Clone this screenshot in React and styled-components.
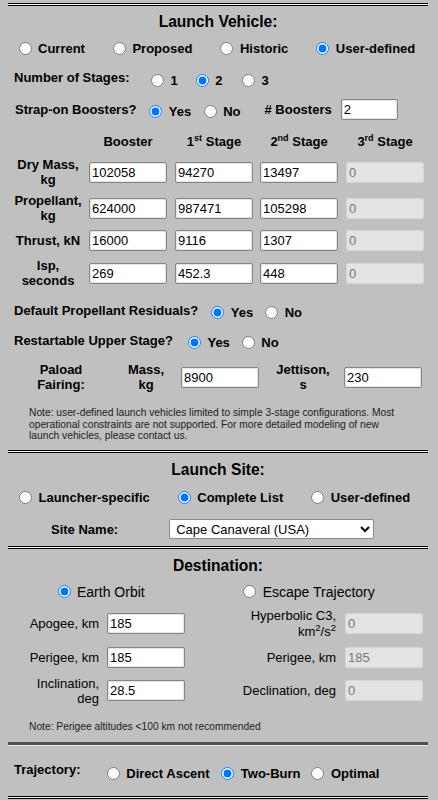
import React from 'react';
import styled, { createGlobalStyle } from 'styled-components';

const GlobalStyle = createGlobalStyle`
  html, body { margin: 0; padding: 0; background: #c0c0c0; }
  body { font-family: "Liberation Sans", Arial, sans-serif; color: #000; }
  * { box-sizing: border-box; }
`;

const Page = styled.div`
  width: 420px;
  margin-left: 8px;
  display: flex;
  flex-direction: column;
`;

const DoubleRule = styled.div`
  height: 3px;
  background: #f4f4f4;
  border-top: 1px solid #000;
  border-bottom: 1px solid #000;
  margin-top: ${p => p.$mt || 0}px;
`;

const ShadedRule = styled.div`
  height: 4px;
  background: #505050;
  border-bottom: 1px solid #e6e6e6;
  margin-top: ${p => p.$mt || 0}px;
`;

const Heading = styled.h2`
  margin: ${p => p.$mt || 0}px 0 0;
  height: 32px;
  display: flex;
  align-items: center;
  justify-content: center;
  font-size: 15.6px;
  font-weight: bold;
`;

const Row = styled.div`
  display: flex;
  align-items: center;
  height: ${p => p.$h}px;
  margin-top: ${p => p.$mt || 0}px;
  padding-left: ${p => p.$pl || 0}px;
  gap: ${p => p.$gap || 0}px;
`;

const Label = styled.span`
  font-size: 13px;
  font-weight: bold;
  white-space: nowrap;
  margin-left: ${p => p.$ml || 0}px;
`;

const Option = styled.label`
  display: inline-flex;
  align-items: center;
  gap: 6.5px;
  margin-left: ${p => p.$ml || 0}px;
  padding-top: ${p => p.$dy || 0}px;
  font-size: ${p => p.$fs || 13}px;
  font-weight: ${p => (p.$regular ? 400 : 700)};
  white-space: nowrap;
`;

const Radio = styled.input.attrs({ type: 'radio' })`
  margin: 0;
  width: 13px;
  height: 13px;
  flex: none;
  accent-color: #0075ff;
`;

const TextBox = styled.input.attrs({ type: 'text' })`
  width: ${p => p.$w || 78}px;
  height: 21px;
  margin: 0 0 0 ${p => p.$ml || 0}px;
  padding: 1px 2px;
  border: 1px solid #858585;
  border-radius: 2px;
  box-shadow: inset 0 0 0 1px #e4e4e4;
  background: #fff;
  font-family: "Liberation Sans", Arial, sans-serif;
  font-size: 13px;
  color: #000;
  flex: none;
  &:disabled {
    background: #e3e3e3;
    border-color: #d6d6d6;
    box-shadow: none;
    color: #777;
  }
`;

const StageGrid = styled.div`
  display: grid;
  grid-template-columns: 80px 86px 85px 86px 83px;
  grid-template-rows: 26px 36px 36px 29px 36px;
  margin-top: 6px;
  align-items: center;
`;

const ColHead = styled.div`
  width: 78px;
  margin-left: 1px;
  text-align: center;
  font-size: 13px;
  font-weight: bold;
  white-space: nowrap;
  sup { font-size: 9px; line-height: 0; vertical-align: 5px; }
`;

const StackLabel = styled.div`
  width: ${p => p.$w}px;
  margin-left: ${p => p.$ml || 0}px;
  text-align: ${p => p.$align || 'center'};
  font-size: 13px;
  font-weight: ${p => (p.$regular ? 400 : 700)};
  line-height: ${p => p.$lh || 15}px;
  flex: none;
  sup { font-size: 9.5px; line-height: 0; vertical-align: 5px; }
`;

const CellInput = styled(TextBox)`
  margin-left: 1px;
`;

const Note = styled.p`
  margin: ${p => p.$mt || 0}px 0 0;
  padding-left: 21px;
  font-size: 10.25px;
  line-height: ${p => p.$lh || 11.5}px;
  color: #1c1c1c;
  white-space: nowrap;
`;

const Select = styled.select`
  width: 205px;
  height: 20px;
  margin-left: 51px;
  font-family: "Liberation Sans", Arial, sans-serif;
  font-size: 13px;
  color: #000;
  background: #fff;
  border: 1px solid #8a8a8a;
  border-radius: 2px;
  padding: 0 2px;
`;

const stages = [
  { label: ['Dry Mass,', 'kg'], values: ['102058', '94270', '13497'] },
  { label: ['Propellant,', 'kg'], values: ['624000', '987471', '105298'] },
  { label: ['Thrust, kN'], values: ['16000', '9116', '1307'] },
  { label: ['Isp,', 'seconds'], values: ['269', '452.3', '448'] },
];

const noop = () => {};

export default function App() {
  return (
    <>
      <GlobalStyle />
      <Page>
        <DoubleRule $mt={3} />
        <Heading>Launch Vehicle:</Heading>
        <Row $h={20} $pl={10.5}>
          <Option><Radio name="lv" />Current</Option>
          <Option $ml={28}><Radio name="lv" />Proposed</Option>
          <Option $ml={28}><Radio name="lv" />Historic</Option>
          <Option $ml={28}><Radio name="lv" defaultChecked />User-defined</Option>
        </Row>
        <Row $h={38} $pl={6}>
          <Label>Number of Stages:</Label>
          <Option $ml={21.5} $dy={6}><Radio name="ns" />1</Option>
          <Option $ml={18} $dy={6}><Radio name="ns" defaultChecked />2</Option>
          <Option $ml={19.5} $dy={6}><Radio name="ns" />3</Option>
        </Row>
        <Row $h={26} $pl={7}>
          <Label>Strap-on Boosters?</Label>
          <Option $ml={13} $dy={5}><Radio name="sb" defaultChecked />Yes</Option>
          <Option $ml={12.4} $dy={5}><Radio name="sb" />No</Option>
          <Label $ml={24}>
            # Boosters
          </Label>
          <TextBox $w={57} $ml={9} value="2" onChange={noop} />
        </Row>

        <StageGrid>
          <div />
          <ColHead>Booster</ColHead>
          <ColHead>1<sup>st</sup> Stage</ColHead>
          <ColHead>2<sup>nd</sup> Stage</ColHead>
          <ColHead>3<sup>rd</sup> Stage</ColHead>
          {stages.map(s => (
            <React.Fragment key={s.label[0]}>
              <StackLabel $w={80}>
                {s.label.map(l => (
                  <div key={l}>{l}</div>
                ))}
              </StackLabel>
              {s.values.map((v, i) => (
                <CellInput key={i} value={v} onChange={noop} />
              ))}
              <CellInput value="0" disabled />
            </React.Fragment>
          ))}
        </StageGrid>

        <Row $h={30} $mt={4} $pl={6}>
          <Label>Default Propellant Residuals?</Label>
          <Option $ml={13} $dy={4}><Radio name="dr" defaultChecked />Yes</Option>
          <Option $ml={12} $dy={4}><Radio name="dr" />No</Option>
        </Row>
        <Row $h={30} $pl={6}>
          <Label>Restartable Upper Stage?</Label>
          <Option $ml={15} $dy={5}><Radio name="ru" defaultChecked />Yes</Option>
          <Option $ml={12} $dy={5}><Radio name="ru" />No</Option>
        </Row>
        <Row $h={36} $mt={4}>
          <StackLabel $w={106}>
            <div>Paload</div>
            <div>Fairing:</div>
          </StackLabel>
          <StackLabel $w={64}>
            <div>Mass,</div>
            <div>kg</div>
          </StackLabel>
          <TextBox $ml={3} value="8900" onChange={noop} />
          <StackLabel $w={82} $ml={3}>
            <div>Jettison,</div>
            <div>s</div>
          </StackLabel>
          <TextBox value="230" onChange={noop} />
        </Row>
        <Note $mt={12}>
          Note: user-defined launch vehicles limited to simple 3-stage configurations. Most
          <br />
          operational constraints are not supported. For more detailed modeling of new
          <br />
          launch vehicles, please contact us.
        </Note>

        <DoubleRule $mt={8.5} />
        <Heading $mt={1}>Launch Site:</Heading>
        <Row $h={22} $pl={11}>
          <Option><Radio name="ls" />Launcher-specific</Option>
          <Option $ml={28}><Radio name="ls" defaultChecked />Complete List</Option>
          <Option $ml={28}><Radio name="ls" />User-defined</Option>
        </Row>
        <Row $h={22} $mt={10}>
          <Label $ml={43}>Site Name:</Label>
          <Select defaultValue="cc">
            <option value="cc">Cape Canaveral (USA)</option>
          </Select>
        </Row>
        <DoubleRule $mt={5.5} />

        <Heading $mt={1}>Destination:</Heading>
        <Row $h={20} $pl={49.5}>
          <Option $fs={14} $regular><Radio name="dest" defaultChecked />Earth Orbit</Option>
          <Option $fs={14} $regular $ml={98.5}><Radio name="dest" />Escape Trajectory</Option>
        </Row>
        <Row $h={34} $mt={5}>
          <StackLabel $w={91} $align="right" $regular>Apogee, km</StackLabel>
          <TextBox $ml={8} value="185" onChange={noop} />
          <StackLabel $w={151} $align="right" $regular $lh={16}>
            <div>Hyperbolic C3,</div>
            <div>km<sup>2</sup>/s<sup>2</sup></div>
          </StackLabel>
          <TextBox $ml={9} value="0" disabled />
        </Row>
        <Row $h={34}>
          <StackLabel $w={91} $align="right" $regular>Perigee, km</StackLabel>
          <TextBox $ml={8} value="185" onChange={noop} />
          <StackLabel $w={151} $align="right" $regular>Perigee, km</StackLabel>
          <TextBox $ml={9} value="185" disabled />
        </Row>
        <Row $h={32}>
          <StackLabel $w={91} $align="right" $regular>
            <div>Inclination,</div>
            <div>deg</div>
          </StackLabel>
          <TextBox $ml={8} value="28.5" onChange={noop} />
          <StackLabel $w={151} $align="right" $regular>Declination, deg</StackLabel>
          <TextBox $ml={9} value="0" disabled />
        </Row>
        <Note $mt={14} $lh={12}>Note: Perigee altitudes &lt;100 km not recommended</Note>
        <ShadedRule $mt={9} />

        <Row $h={48} $pl={6}>
          <Label>Trajectory:</Label>
          <Option $ml={26.3} $dy={7}><Radio name="tr" />Direct Ascent</Option>
          <Option $ml={11.7} $dy={7}><Radio name="tr" defaultChecked />Two-Burn</Option>
          <Option $ml={11} $dy={7}><Radio name="tr" />Optimal</Option>
        </Row>
        <DoubleRule $mt={2} />
      </Page>
    </>
  );
}
